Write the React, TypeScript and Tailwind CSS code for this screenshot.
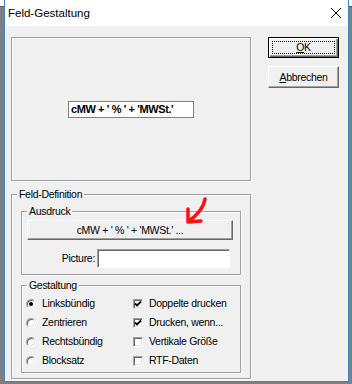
import type { ReactNode } from 'react'

const ui = "font-['Liberation_Sans',Arial,sans-serif] text-[10.5px] tracking-[-0.3px] leading-[13px] text-black"
const etched = 'border border-[#a0a0a0] shadow-[inset_1px_1px_0_#ffffff,1px_1px_0_#ffffff]'
const bevel =
  'bg-[#f0f0f0] border border-t-white border-l-white border-b-[#696969] border-r-[#696969] shadow-[inset_-1px_-1px_0_#a0a0a0]'

function Group({ label, className, children }: { label: string; className: string; children: ReactNode }) {
  return (
    <div className={`relative ${etched} ${className}`}>
      <span className="absolute -top-[7px] left-[5px] bg-[#f0f0f0] px-[2px]">{label}</span>
      {children}
    </div>
  )
}

function Radio({ checked, label }: { checked?: boolean; label: string }) {
  return (
    <div className="flex h-[19px] items-center gap-[6px]">
      <span className="flex h-[10px] w-[10px] items-center justify-center rounded-full border border-t-[#a0a0a0] border-l-[#a0a0a0] border-b-white border-r-white bg-white shadow-[inset_1px_1px_0_#696969,inset_-1px_-1px_0_#e3e3e3]">
        {checked && <span className="h-[4px] w-[4px] rounded-full bg-black" />}
      </span>
      <span>{label}</span>
    </div>
  )
}

function Check({ checked, label }: { checked?: boolean; label: string }) {
  return (
    <div className="flex h-[19px] items-center gap-[6px]">
      <span className="flex h-[10px] w-[10px] items-center justify-center border border-t-[#a0a0a0] border-l-[#a0a0a0] border-b-white border-r-white bg-white shadow-[inset_1px_1px_0_#696969,inset_-1px_-1px_0_#e3e3e3]">
        {checked && (
          <svg width="8" height="8" viewBox="0 0 8 8">
            <path d="M1 3.5 L3 5.5 L7 1.5" fill="none" stroke="#000" strokeWidth="1.8" />
          </svg>
        )}
      </span>
      <span>{label}</span>
    </div>
  )
}

export default function App() {
  return (
    <div
      className={`relative h-[384px] w-[352px] overflow-hidden bg-[linear-gradient(to_bottom,#ffffff_0px,#ffffff_6px,#5a5a5a_6px,#5a5a5a_7px,#7f7f7f_7px)] pl-[4px] ${ui}`}
    >
      <div className="flex h-[382px] w-[345px] flex-col border-x border-b border-[#3c85c7]">
        <div className="flex h-[26px] items-center justify-between bg-white pl-[3px] pr-[7px]">
          <span className="text-[11.5px] tracking-normal">Feld-Gestaltung</span>
          <svg width="10" height="10" viewBox="0 0 10 10">
            <path d="M0 0 L10 10 M10 0 L0 10" stroke="#000" strokeWidth="1" />
          </svg>
        </div>

        <div className="flex flex-1 bg-[#f0f0f0] pl-[6px] pt-[11px]">
          <div className="flex w-[240px] flex-col">
            <div className={`flex h-[144px] items-center justify-center ${etched}`}>
              <div className="flex h-[17px] w-[126px] items-center border border-[#808080] bg-white pl-[2px] text-[11px] font-bold tracking-[-0.4px]">
                cMW + ' % ' + 'MWSt.'
              </div>
            </div>

            <Group label="Feld-Definition" className="mt-[13px] h-[185px] px-[9px] pt-[16px]">
              <Group label="Ausdruck" className="flex h-[64px] flex-col px-[5px] pt-[8px]">
                <button className={`h-[20px] w-[206px] ${bevel}`}>cMW + ' % ' + 'MWSt.' ...</button>
                <div className="mt-[9px] flex items-center justify-end gap-[2px] pr-[5px]">
                  <span>Picture:</span>
                  <div className="h-[19px] w-[133px] border border-t-[#a0a0a0] border-l-[#a0a0a0] border-b-white border-r-white bg-white shadow-[inset_1px_1px_0_#696969]" />
                </div>
              </Group>

              <Group label="Gestaltung" className="mt-[10px] flex h-[88px] pl-[4px] pt-[8px]">
                <div className="flex w-[107px] flex-col">
                  <Radio checked label="Linksbündig" />
                  <Radio label="Zentrieren" />
                  <Radio label="Rechtsbündig" />
                  <Radio label="Blocksatz" />
                </div>
                <div className="flex flex-col">
                  <Check checked label="Doppelte drucken" />
                  <Check checked label="Drucken, wenn..." />
                  <Check label="Vertikale Größe" />
                  <Check label="RTF-Daten" />
                </div>
              </Group>
            </Group>
          </div>

          <div className="ml-[17px] flex w-[71px] flex-col gap-[8px]">
            <button className="flex h-[21px] w-[71px] border border-black bg-[#f0f0f0] p-[1px] shadow-[inset_1px_1px_0_#ffffff,inset_-1px_-1px_0_#696969,inset_-2px_-2px_0_#a0a0a0]">
              <span className="m-[2px] flex flex-1 items-center justify-center border border-dotted border-black">
                <span className="underline underline-offset-1">O</span>K
              </span>
            </button>
            <button className={`h-[22px] w-[71px] ${bevel}`}>
              <span className="underline underline-offset-1">A</span>bbrechen
            </button>
          </div>
        </div>
      </div>

      <svg className="absolute left-[183px] top-[195px]" width="28" height="30" viewBox="0 0 28 30">
        <path
          d="M22 4 C21 11 17 18 6 26 M5 14 L5 27 L18 26"
          fill="none"
          stroke="#ff1010"
          strokeWidth="3.5"
          strokeLinecap="round"
          strokeLinejoin="round"
        />
      </svg>
    </div>
  )
}
